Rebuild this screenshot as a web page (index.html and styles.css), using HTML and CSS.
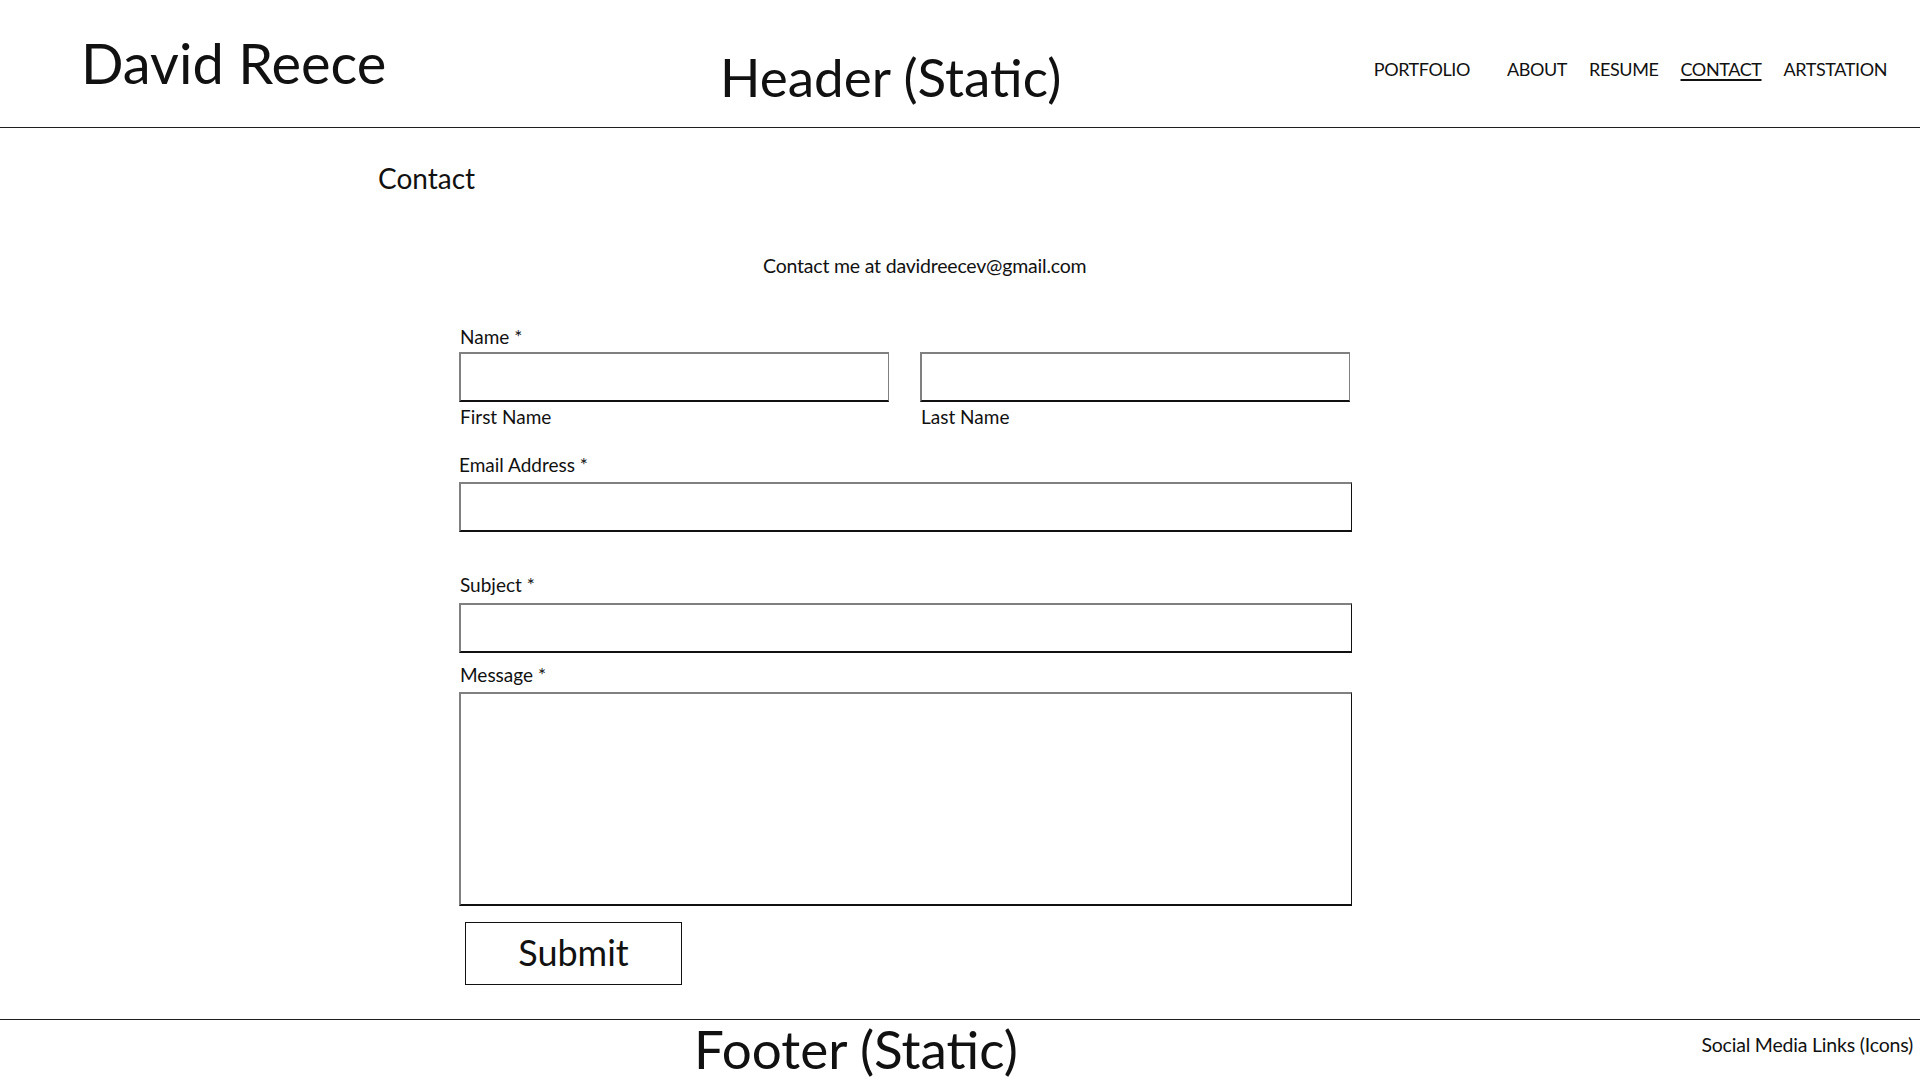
FILE: index.html
```html
<!DOCTYPE html>
<html lang="en">
<head>
<meta charset="utf-8">
<title>David Reece - Contact</title>
<link rel="stylesheet" href="styles.css">
</head>
<body>
<header class="site-header">
  <div class="logo">David Reece</div>
  <div class="header-label">Header (Static)</div>
  <nav class="nav">
    <a class="nav-link nav-portfolio" href="#">PORTFOLIO</a>
    <a class="nav-link" href="#">ABOUT</a>
    <a class="nav-link" href="#">RESUME</a>
    <a class="nav-link is-active" href="#">CONTACT</a>
    <a class="nav-link" href="#">ARTSTATION</a>
  </nav>
</header>

<main class="main">
  <h1 class="page-title">Contact</h1>
  <p class="intro">Contact me at davidreecev@gmail.com</p>

  <form class="contact-form">
    <div class="label label-name">Name *</div>
    <div class="name-row">
      <div class="name-col">
        <input class="field field-name" type="text" aria-label="First Name">
        <div class="sub-label">First Name</div>
      </div>
      <div class="name-col">
        <input class="field field-name" type="text" aria-label="Last Name">
        <div class="sub-label">Last Name</div>
      </div>
    </div>

    <div class="label label-email">Email Address *</div>
    <input class="field" type="email" aria-label="Email Address">

    <div class="label label-subject">Subject *</div>
    <input class="field" type="text" aria-label="Subject">

    <div class="label label-message">Message *</div>
    <textarea class="field field-message" aria-label="Message"></textarea>

    <button class="submit" type="button">Submit</button>
  </form>
</main>

<footer class="site-footer">
  <div class="footer-label">Footer (Static)</div>
  <div class="social">Social Media Links (Icons)</div>
</footer>
</body>
</html>
```

FILE: styles.css
```css
* {
  box-sizing: border-box;
}

html, body {
  margin: 0;
  padding: 0;
}

body {
  width: 1920px;
  height: 1080px;
  overflow: hidden;
  background: #ffffff;
  color: #111111;
  font-family: Lato, "Liberation Sans", sans-serif;
}

/* ---------- Header ---------- */
.site-header {
  height: 128px;
  border-bottom: 1px solid #1e1e1e;
  display: grid;
  grid-template-columns: 639px auto 1fr;
  align-items: start;
  padding: 0 33px 0 81px;
}

.logo {
  font-size: 56px;
  line-height: 1;
  margin-top: 35px;
  white-space: nowrap;
}

.header-label {
  font-size: 53px;
  line-height: 1;
  margin-top: 50px;
  white-space: nowrap;
}

.nav {
  justify-self: end;
  display: flex;
  gap: 22px;
  margin-top: 60px;
}

.nav-link {
  font-size: 18px;
  letter-spacing: -0.4px;
  line-height: 1;
  color: #111111;
  text-decoration: none;
  white-space: nowrap;
}

.nav-portfolio {
  margin-right: 15px;
}

.nav-link.is-active {
  text-decoration: underline;
  text-decoration-thickness: 2px;
  text-underline-offset: 3px;
}

/* ---------- Main ---------- */
.main {
  padding-top: 36px;
}

.page-title {
  margin: 0 0 0 378px;
  font-size: 28px;
  font-weight: 400;
  line-height: 1;
}

.intro {
  margin: 64px 0 0 763px;
  font-size: 19.5px;
  letter-spacing: -0.2px;
  line-height: 1;
  white-space: nowrap;
}

.contact-form {
  margin: 51px 0 0 459px;
  width: 893px;
}

.label,
.sub-label {
  font-size: 19px;
  line-height: 1;
  white-space: nowrap;
}

.label-name {
  margin: 0 0 6px 1px;
}

.name-row {
  display: grid;
  grid-template-columns: 430px 430px;
  column-gap: 31px;
}

.sub-label {
  margin: 5px 0 0 1px;
}

.label-email {
  margin: 29px 0 8px 0;
}

.label-subject {
  margin: 43px 0 9px 1px;
}

.label-message {
  margin: 12px 0 8px 1px;
}

.field {
  display: block;
  width: 100%;
  height: 50px;
  margin: 0;
  padding: 0 10px;
  background: #ffffff;
  font-family: Lato, "Liberation Sans", sans-serif;
  font-size: 18px;
  border-style: solid;
  border-width: 2px 1px 2px 2px;
  border-color: #808080 #111111 #111111 #808080;
  border-radius: 0;
  outline: none;
}

.field-name {
  border-right-color: #808080;
}

.field-message {
  height: 214px;
  resize: none;
  padding: 8px 10px;
}

.submit {
  display: flex;
  align-items: center;
  justify-content: center;
  margin: 16px 0 0 6px;
  width: 217px;
  height: 63px;
  padding: 0 0 2px 0;
  background: #ffffff;
  border: 1px solid #111111;
  border-radius: 0;
  color: #111111;
  font-family: Lato, "Liberation Sans", sans-serif;
  font-size: 36px;
  line-height: 1;
  cursor: pointer;
}

/* ---------- Footer ---------- */
.site-footer {
  margin-top: 34px;
  border-top: 1px solid #1e1e1e;
  display: flex;
  align-items: flex-start;
  padding: 0 7px 0 694px;
  height: 61px;
}

.footer-label {
  font-size: 53px;
  line-height: 1;
  margin-top: 2px;
  white-space: nowrap;
}

.social {
  margin-left: auto;
  margin-top: 15px;
  font-size: 19.5px;
  letter-spacing: -0.2px;
  line-height: 1;
  white-space: nowrap;
}
```
